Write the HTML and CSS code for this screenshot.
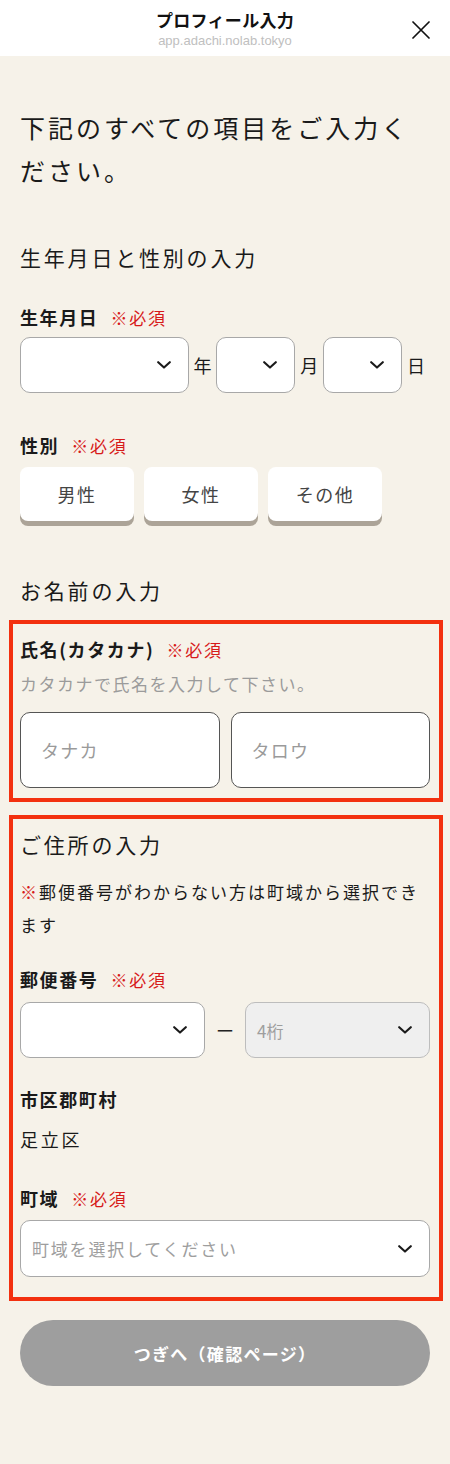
FILE: index.html
```html
<!DOCTYPE html>
<html lang="ja">
<head>
<meta charset="utf-8">
<meta name="viewport" content="width=device-width, initial-scale=1">
<title>プロフィール入力</title>
<link rel="stylesheet" href="styles.css">
</head>
<body>
<header class="topbar">
  <div class="topbar-side"></div>
  <div class="topbar-titles">
    <div class="topbar-title">プロフィール入力</div>
    <div class="topbar-url">app.adachi.nolab.tokyo</div>
  </div>
  <div class="topbar-side topbar-right">
    <button class="close-btn" aria-label="閉じる">
      <svg width="18" height="18" viewBox="0 0 18 18"><path d="M1 1L17 17M17 1L1 17" stroke="#111" stroke-width="1.7" fill="none" stroke-linecap="round"/></svg>
    </button>
  </div>
</header>

<main class="page">
  <h1 class="lead">下記のすべての項目をご入力ください。</h1>

  <h2 class="section-title section-first">生年月日と性別の入力</h2>

  <div class="label label-birth">生年月日<span class="req">※必須</span></div>
  <div class="date-row">
    <div class="select select-year"><svg class="chev" width="14" height="8" viewBox="0 0 14 8"><path d="M1.2 1.2L7 6.6 12.8 1.2" stroke="#1a1a1a" stroke-width="2.1" fill="none" stroke-linecap="round" stroke-linejoin="round"/></svg></div>
    <span class="unit">年</span>
    <div class="select select-small"><svg class="chev" width="14" height="8" viewBox="0 0 14 8"><path d="M1.2 1.2L7 6.6 12.8 1.2" stroke="#1a1a1a" stroke-width="2.1" fill="none" stroke-linecap="round" stroke-linejoin="round"/></svg></div>
    <span class="unit">月</span>
    <div class="select select-small"><svg class="chev" width="14" height="8" viewBox="0 0 14 8"><path d="M1.2 1.2L7 6.6 12.8 1.2" stroke="#1a1a1a" stroke-width="2.1" fill="none" stroke-linecap="round" stroke-linejoin="round"/></svg></div>
    <span class="unit">日</span>
  </div>

  <div class="label label-gender">性別<span class="req">※必須</span></div>
  <div class="gender-row">
    <button class="gender-btn">男性</button>
    <button class="gender-btn">女性</button>
    <button class="gender-btn">その他</button>
  </div>

  <h2 class="section-title section-name">お名前の入力</h2>

  <section class="mark-box box-name">
    <div class="label">氏名(カタカナ)<span class="req">※必須</span></div>
    <p class="hint">カタカナで氏名を入力して下さい。</p>
    <div class="name-row">
      <div class="text-input"><span class="placeholder">タナカ</span></div>
      <div class="text-input"><span class="placeholder">タロウ</span></div>
    </div>
  </section>

  <section class="mark-box box-address">
    <h2 class="section-title">ご住所の入力</h2>
    <p class="note"><span class="note-mark">※</span>郵便番号がわからない方は町域から選択できます</p>

    <div class="label label-postal">郵便番号<span class="req">※必須</span></div>
    <div class="postal-row">
      <div class="select select-postal"><svg class="chev" width="14" height="8" viewBox="0 0 14 8"><path d="M1.2 1.2L7 6.6 12.8 1.2" stroke="#1a1a1a" stroke-width="2.1" fill="none" stroke-linecap="round" stroke-linejoin="round"/></svg></div>
      <span class="dash">ー</span>
      <div class="select select-postal select-disabled"><span class="select-text">4桁</span><svg class="chev" width="14" height="8" viewBox="0 0 14 8"><path d="M1.2 1.2L7 6.6 12.8 1.2" stroke="#1a1a1a" stroke-width="2.1" fill="none" stroke-linecap="round" stroke-linejoin="round"/></svg></div>
    </div>

    <div class="label label-city">市区郡町村</div>
    <div class="value">足立区</div>

    <div class="label label-town">町域<span class="req">※必須</span></div>
    <div class="select select-town"><span class="select-placeholder">町域を選択してください</span><svg class="chev" width="14" height="8" viewBox="0 0 14 8"><path d="M1.2 1.2L7 6.6 12.8 1.2" stroke="#1a1a1a" stroke-width="2.1" fill="none" stroke-linecap="round" stroke-linejoin="round"/></svg></div>
  </section>

  <button class="next-btn">つぎへ（確認ページ）</button>
</main>
</body>
</html>
```

FILE: styles.css
```css
* { box-sizing: border-box; }

html, body {
  margin: 0;
  padding: 0;
}

body {
  font-family: "Noto Sans CJK JP", "Noto Sans", sans-serif;
  color: #1a1a1a;
  background: #f6f2e9;
}

/* Header */
.topbar {
  display: grid;
  grid-template-columns: 1fr auto 1fr;
  align-items: start;
  height: 56px;
  background: #ffffff;
  padding: 9px 20px 0;
}

.topbar-titles {
  text-align: center;
}

.topbar-title {
  font-size: 17px;
  line-height: 22px;
  font-weight: 600;
  letter-spacing: 0.3px;
  color: #111;
}

.topbar-url {
  margin-top: 2px;
  font-family: "Liberation Sans", "Noto Sans", sans-serif;
  font-size: 13px;
  line-height: 16px;
  color: #c0c0c0;
}

.topbar-right {
  display: flex;
  justify-content: flex-end;
}

.close-btn {
  margin-top: 12px;
  padding: 0;
  border: 0;
  background: none;
  width: 18px;
  height: 18px;
  display: block;
}

.close-btn svg { display: block; }

/* Page */
.page {
  padding: 50px 20px 78px;
  min-height: 1408px;
}

.lead {
  margin: 0;
  font-size: 25px;
  line-height: 43px;
  font-weight: 400;
  letter-spacing: 3px;
}

.section-title {
  margin: 0;
  font-size: 21px;
  line-height: 30px;
  font-weight: 400;
  letter-spacing: 2.8px;
}

.section-first { margin-top: 50px; }
.section-name { margin-top: 54px; }

.label {
  font-size: 18px;
  line-height: 28px;
  font-weight: 700;
  letter-spacing: 1.6px;
}

.req {
  margin-left: 12px;
  font-size: 17px;
  font-weight: 400;
  color: #d71a1a;
  letter-spacing: 1.8px;
}

.label-birth { margin-top: 31px; }
.label-gender { margin-top: 38px; }

/* Selects */
.select {
  display: flex;
  align-items: center;
  height: 56px;
  background: #ffffff;
  border: 1px solid #a8a8a8;
  border-radius: 10px;
  padding: 0 17px 0 11px;
}

.select .chev {
  margin-left: auto;
  flex: none;
}

.date-row {
  display: flex;
  align-items: center;
  margin-top: 5px;
}

.select-year { width: 169px; }
.select-small { width: 79px; }

.unit {
  width: 20px;
  margin: 0 4px;
  font-size: 18px;
  line-height: 28px;
  text-align: center;
}

/* Gender */
.gender-row {
  display: flex;
  gap: 10px;
  margin-top: 7px;
}

.gender-btn {
  width: 114px;
  height: 54px;
  border: 0;
  border-radius: 8px;
  background: #ffffff;
  box-shadow: 0 5px 0 #aca498;
  font-family: inherit;
  font-size: 18px;
  letter-spacing: 1.5px;
  color: #444;
  padding: 0;
}

/* Marked boxes */
.mark-box {
  border: 4px solid #f3300f;
  margin: 0 -13px 0 -11px;
  padding-left: 7px;
  padding-right: 9px;
}

.box-name {
  margin-top: 15px;
  padding-top: 11px;
  padding-bottom: 10px;
}

.box-address {
  margin-top: 13px;
  padding-top: 10px;
  padding-bottom: 20px;
}

.hint {
  margin: 6px 0 0;
  font-size: 17px;
  line-height: 28px;
  letter-spacing: 1.5px;
  color: #9b9b9b;
}

.name-row {
  display: flex;
  gap: 11px;
  margin-top: 14px;
}

.text-input {
  flex: 1;
  height: 76px;
  display: flex;
  align-items: center;
  padding-left: 20px;
  background: #ffffff;
  border: 1px solid #555;
  border-radius: 10px;
}

.placeholder {
  font-size: 18px;
  letter-spacing: 1.2px;
  color: #9a9a9a;
}

.note {
  margin: 16px 0 0;
  font-size: 17px;
  line-height: 33px;
  letter-spacing: 2px;
}

.note-mark {
  color: #d71a1a;
  letter-spacing: 0;
  margin-right: 2px;
}

.label-postal { margin-top: 24px; }

.postal-row {
  display: flex;
  align-items: center;
  margin-top: 8px;
}

.select-postal { flex: 1; }

.dash {
  width: 40px;
  text-align: center;
  font-size: 18px;
  font-weight: 400;
  color: #222;
}

.select-disabled {
  background: #efefef;
  border-color: #bdbdbd;
}

.select-text {
  font-size: 17px;
  color: #9e9e9e;
}

.label-city { margin-top: 27px; }

.value {
  margin-top: 12px;
  font-size: 18px;
  line-height: 28px;
  letter-spacing: 2.8px;
}

.label-town { margin-top: 31px; }

.select-town {
  margin-top: 7px;
  height: 57px;
}

.select-placeholder {
  font-size: 17px;
  letter-spacing: 1.8px;
  color: #9e9e9e;
}

/* Next button */
.next-btn {
  display: block;
  width: 100%;
  height: 66px;
  margin-top: 19px;
  border: 0;
  border-radius: 33px;
  background: #9e9e9e;
  color: #ffffff;
  font-family: inherit;
  font-size: 17px;
  font-weight: 700;
  letter-spacing: 1.3px;
}
```
